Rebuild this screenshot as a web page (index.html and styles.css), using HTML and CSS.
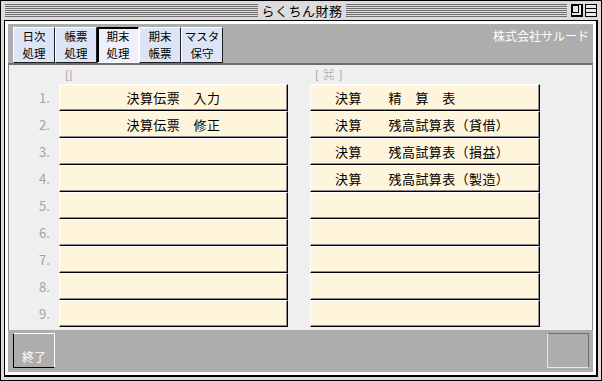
FILE: index.html
```html
<!DOCTYPE html>
<html lang="ja">
<head>
<meta charset="utf-8">
<title>らくちん財務</title>
<link rel="stylesheet" href="styles.css">
</head>
<body>
<div class="window">
  <div class="titlebar">
    <div class="stripes stripes-left"></div>
    <div class="title">らくちん財務</div>
    <div class="stripes stripes-right"></div>
    <div class="tbtns">
      <svg class="tbtn" width="12" height="13" viewBox="0 0 12 13"><rect x="0.5" y="0.5" width="11" height="12" fill="#e8e8e8" stroke="#000"/><rect x="1.5" y="1.5" width="6" height="7" fill="none" stroke="#000"/><line x1="1" y1="11.5" x2="11" y2="11.5" stroke="#000"/><line x1="10.5" y1="1" x2="10.5" y2="12" stroke="#000"/></svg>
      <svg class="tbtn" width="12" height="13" viewBox="0 0 12 13"><rect x="0.5" y="0.5" width="11" height="12" fill="#e8e8e8" stroke="#000"/><line x1="1" y1="4.5" x2="11" y2="4.5" stroke="#000"/><line x1="1" y1="8.5" x2="11" y2="8.5" stroke="#000"/></svg>
    </div>
  </div>
  <div class="frame">
    <div class="app">
      <div class="toolbar">
        <div class="tabs">
          <div class="tab"><span class="tab-line">日次</span><span class="tab-line">処理</span></div>
          <div class="tab"><span class="tab-line">帳票</span><span class="tab-line">処理</span></div>
          <div class="tab selected"><span class="tab-line">期末</span><span class="tab-line">処理</span></div>
          <div class="tab"><span class="tab-line">期末</span><span class="tab-line">帳票</span></div>
          <div class="tab"><span class="tab-line">マスタ</span><span class="tab-line">保守</span></div>
        </div>
        <div class="company">株式会社サルード</div>
      </div>
      <div class="main">
        <div class="col col-left">
          <div class="caption">[]</div>
          <div class="row"><span class="num">1.</span><div class="btn center">決算伝票　入力</div></div>
          <div class="row"><span class="num">2.</span><div class="btn center">決算伝票　修正</div></div>
          <div class="row"><span class="num">3.</span><div class="btn center"></div></div>
          <div class="row"><span class="num">4.</span><div class="btn center"></div></div>
          <div class="row"><span class="num">5.</span><div class="btn center"></div></div>
          <div class="row"><span class="num">6.</span><div class="btn center"></div></div>
          <div class="row"><span class="num">7.</span><div class="btn center"></div></div>
          <div class="row"><span class="num">8.</span><div class="btn center"></div></div>
          <div class="row"><span class="num">9.</span><div class="btn center"></div></div>
        </div>
        <div class="col col-right">
          <div class="caption">[ ⌘ ]</div>
          <div class="row"><div class="btn left">決算　　精　算　表</div></div>
          <div class="row"><div class="btn left">決算　　残高試算表（貸借）</div></div>
          <div class="row"><div class="btn left">決算　　残高試算表（損益）</div></div>
          <div class="row"><div class="btn left">決算　　残高試算表（製造）</div></div>
          <div class="row"><div class="btn left"></div></div>
          <div class="row"><div class="btn left"></div></div>
          <div class="row"><div class="btn left"></div></div>
          <div class="row"><div class="btn left"></div></div>
          <div class="row"><div class="btn left"></div></div>
        </div>
      </div>
      <div class="footer">
        <div class="fbtn quit">終了</div>
        <div class="fbtn blank"></div>
      </div>
    </div>
  </div>
</div>
</body>
</html>
```
FILE: styles.css
```css
* { box-sizing: border-box; }
html, body { margin: 0; padding: 0; background: #fff; }
body {
  font-family: "Noto Sans CJK JP", "Noto Sans", sans-serif;
  font-size: 13px;
  color: #000;
}
.window {
  width: 602px;
  height: 381px;
  border: 1px solid #000;
  background: #dcdcdc;
  display: flex;
  flex-direction: column;
}
.titlebar {
  height: 19px;
  display: flex;
  align-items: center;
  padding: 0 4px 0 4px;
}
.stripes {
  height: 13px;
  background: repeating-linear-gradient(to bottom, #6e6e6e 0, #6e6e6e 1px, #dcdcdc 1px, #dcdcdc 2px);
}
.stripes-left { width: 253px; }
.stripes-right { flex: 1; }
.title {
  width: 88px;
  text-align: center;
  font-size: 13px;
  line-height: 19px;
  letter-spacing: 0.5px;
  color: #000;
}
.tbtns {
  display: flex;
  gap: 2px;
  margin-left: 4px;
}
.tbtn { display: block; }
.frame {
  flex: 1;
  margin: 0 3px 3px 3px;
  border-top: 1px solid #000;
  border-left: 1px solid #000;
  border-right: 2px solid #000;
  border-bottom: 2px solid #000;
  background: #fff;
  padding: 3px;
  display: flex;
}
.app {
  flex: 1;
  background: #adadad;
  display: flex;
  flex-direction: column;
}
.toolbar {
  height: 41px;
  border-bottom: 2px solid #6f6f6f;
  display: flex;
  justify-content: space-between;
  padding: 3px 4px 0 5px;
}
.tabs {
  display: flex;
  height: 36px;
}
.tab {
  width: 42px;
  background: #dde4f5;
  border-top: 1px solid #fff;
  border-left: 1px solid #fff;
  border-right: 1px solid #1e1e1e;
  border-bottom: 1px solid #1e1e1e;
  display: flex;
  flex-direction: column;
  align-items: center;
}
.tab-line {
  display: block;
  font-size: 11.5px;
  line-height: 17px;
  height: 17px;
  color: #000;
}
.tab.selected {
  background: #eef1fa;
  border-top: 1px solid #000;
  border-left: 1px solid #000;
  border-right: 1px solid #fff;
  border-bottom: 1px solid #fff;
  box-shadow: inset 1px 1px 0 #000;
}
.company {
  color: #fff;
  font-size: 12px;
  line-height: 14px;
  padding-top: 2px;
}
.main {
  height: 265px;
  background: #efefef;
  border-left: 1px solid #8a8a8a;
  border-right: 1px solid #8a8a8a;
  display: flex;
  gap: 22px;
}
.col { display: flex; flex-direction: column; }
.col-left { width: 279px; }
.col-right { width: 230px; }
.caption {
  height: 19px;
  line-height: 19px;
  font-size: 11px;
  color: #9a9a9a;
  white-space: pre;
}
.col-left .caption { padding-left: 56px; }
.col-right .caption { padding-left: 5px; letter-spacing: 1px; }
.row {
  display: flex;
  height: 27px;
}
.num {
  width: 41px;
  margin-right: 9px;
  text-align: right;
  color: #a3a3a3;
  font-size: 13px;
  line-height: 27px;
}
.btn {
  width: 230px;
  height: 27px;
  background: #fff5dd;
  border-top: 1px solid #fff;
  border-left: 1px solid #fff;
  border-right: 1px solid #000;
  border-bottom: 1px solid #000;
  box-shadow: inset -1px -1px 0 #8c8c8c;
  line-height: 25px;
  font-size: 13px;
  letter-spacing: 0.4px;
  white-space: pre;
}
.btn.center { text-align: center; }
.btn.left { padding-left: 24px; }
.footer {
  flex: 1;
  display: flex;
  justify-content: space-between;
  padding: 3px 4px 3px 5px;
}
.fbtn {
  width: 42px;
  height: 35px;
}
.quit {
  border-top: 1px solid #fff;
  border-right: 1px solid #fff;
  border-left: 1px solid #000;
  border-bottom: 1px solid #000;
  color: #fff;
  font-size: 12px;
  display: flex;
  align-items: flex-end;
  padding: 0 0 3px 8px;
  line-height: 14px;
}
.blank {
  border-top: 1px solid #6f6f6f;
  border-right: 1px solid #6f6f6f;
  border-left: 1px solid #e8e8e8;
  border-bottom: 1px solid #e8e8e8;
}
```
